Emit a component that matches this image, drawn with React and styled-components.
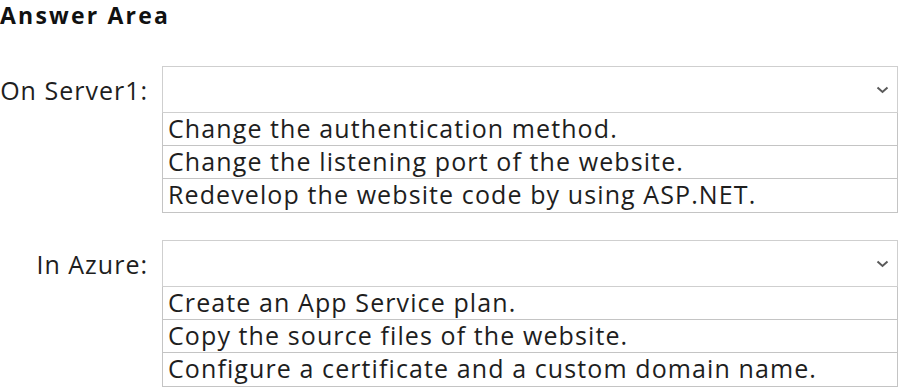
import React from "react";
import styled, { createGlobalStyle } from "styled-components";

const groups = [
  {
    label: "On Server1:",
    options: [
      "Change the authentication method.",
      "Change the listening port of the website.",
      "Redevelop the website code by using ASP.NET.",
    ],
  },
  {
    label: "In Azure:",
    options: [
      "Create an App Service plan.",
      "Copy the source files of the website.",
      "Configure a certificate and a custom domain name.",
    ],
  },
];

const Chevron = () => (
  <svg width="13" height="8" viewBox="0 0 13 8">
    <path d="M1.5 1.5 L6.5 6 L11.5 1.5" fill="none" stroke="#5a5a5a" strokeWidth="2" />
  </svg>
);

const App = () => (
  <Page>
    <GlobalStyle />
    <Title>Answer Area</Title>
    {groups.map(g => (
      <Group key={g.label}>
        <Label>{g.label}</Label>
        <Dropdown>
          <Select>
            <Chevron />
          </Select>
          <Options>
            {g.options.map(o => (
              <Option key={o}>{o}</Option>
            ))}
          </Options>
        </Dropdown>
      </Group>
    ))}
  </Page>
);

export default App;

//------------------- Styles ------------------------//

const GlobalStyle = createGlobalStyle`
  *, *:before, *:after {
    box-sizing: border-box;
  }
  body {
    margin: 0;
    background: #fff;
    font-family: "Open Sans", "Noto Sans", sans-serif;
    color: #1e1e1e;
  }
`;

const Page = styled.div`
  width: 900px;
  height: 390px;
  padding-right: 2px;
  overflow: hidden;
`;

const Title = styled.h1`
  margin: 0;
  font-size: 23px;
  font-weight: 700;
  line-height: 30px;
  letter-spacing: 2.2px;
  color: #111;
`;

const Group = styled.div`
  display: grid;
  grid-template-columns: 162px 1fr;
  margin-top: 36px;
  & + & {
    margin-top: 27px;
  }
`;

const Label = styled.div`
  height: 47px;
  display: flex;
  align-items: center;
  justify-content: flex-end;
  padding-right: 14px;
  font-size: 25px;
  letter-spacing: 1px;
  white-space: nowrap;
`;

const Dropdown = styled.div`
  display: flex;
  flex-direction: column;
`;

const Select = styled.div`
  height: 47px;
  border: 1px solid #cfcfcf;
  display: flex;
  align-items: center;
  justify-content: flex-end;
  padding-right: 8px;
`;

const Options = styled.div`
  border: 1px solid #c4c4c4;
  border-top: none;
`;

const Option = styled.div`
  height: 33px;
  line-height: 31px;
  padding-left: 5px;
  font-size: 25px;
  letter-spacing: 1.1px;
  border-bottom: 1px solid #c4c4c4;
  white-space: nowrap;
  &:last-child {
    border-bottom: none;
  }
`;
